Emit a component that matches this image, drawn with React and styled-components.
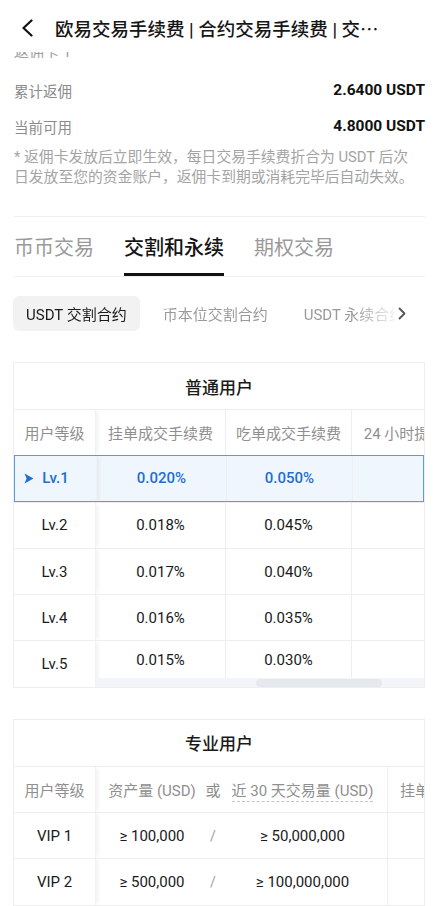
import React from "react";
import styled, { createGlobalStyle, css } from "styled-components";

const GlobalStyle = createGlobalStyle`
  html, body { margin: 0; padding: 0; background: #fff; overflow: hidden; }
  body {
    font-family: Roboto, "Noto Sans CJK SC", sans-serif;
    color: #1a1a1a;
    -webkit-font-smoothing: antialiased;
  }
  * { box-sizing: border-box; }
`;

const Page = styled.div`
  width: 440px;
  height: 906px;
  overflow: hidden;
  background: #fff;
`;

const Header = styled.header`
  height: 52px;
  padding: 4px 0 0 21px;
  display: flex;
  align-items: center;
  gap: 22px;
`;

const Title = styled.h1`
  margin: 0;
  font-size: 18.5px;
  font-weight: 500;
  color: #161616;
  white-space: nowrap;
`;

const Ellipsis = styled.span`
  font-family: "Noto Sans CJK SC", sans-serif;
  font-weight: 400;
`;

const Clip = styled.div`
  height: 6px;
  overflow: hidden;
  padding: 0 14px;
  display: flex;
  align-items: flex-end;
  span {
    font-size: 15px;
    line-height: 15px;
    color: #a0a0a0;
    margin-bottom: -2px;
  }
`;

const InfoList = styled.div`
  padding: 14px 15px 0 14px;
`;

const InfoRow = styled.div`
  height: 36px;
  display: flex;
  align-items: center;
  justify-content: space-between;
`;

const Label = styled.span`
  font-size: 14.5px;
  color: #8c8c8c;
`;

const Value = styled.span`
  font-size: 15.5px;
  font-weight: 700;
  color: #111;
`;

const Note = styled.p`
  margin: 3px 0 0;
  font-size: 14.8px;
  line-height: 20px;
  color: #a4a4a4;
  white-space: nowrap;
`;

const TabsBar = styled.nav`
  margin: 29px 15px 0 14px;
  border-top: 1px solid #efefef;
  border-bottom: 1px solid #efefef;
  display: flex;
  gap: 30px;
`;

const Tab = styled.div`
  height: 59px;
  padding-top: 3px;
  display: flex;
  align-items: center;
  font-size: 20px;
  border-bottom: 3px solid transparent;
  color: #9a9a9a;
  ${(p) =>
    p.$active &&
    css`
      color: #141414;
      font-weight: 500;
      border-bottom-color: #111;
    `}
`;

const SubTabs = styled.div`
  margin-top: 19px;
  padding-left: 13px;
  display: flex;
  align-items: center;
  height: 35px;
`;

const SubScroll = styled.div`
  flex: 1;
  min-width: 0;
  overflow: hidden;
  display: flex;
  gap: 10px;
  -webkit-mask-image: linear-gradient(to right, #000 calc(100% - 42px), rgba(0,0,0,0.15));
  mask-image: linear-gradient(to right, #000 calc(100% - 42px), rgba(0,0,0,0.15));
`;

const Pill = styled.div`
  flex-shrink: 0;
  height: 35px;
  padding: 0 13px;
  border-radius: 6px;
  display: flex;
  align-items: center;
  font-size: 15px;
  white-space: nowrap;
  color: #9a9a9a;
  ${(p) =>
    p.$active &&
    css`
      background: #f2f2f2;
      color: #1a1a1a;
    `}
`;

const MoreBox = styled.div`
  width: 46px;
  padding-left: 4px;
  display: flex;
  align-items: center;
`;

const Card = styled.section`
  margin: 31px 15px 0 13px;
  border: 1px solid #eeeeee;
  overflow: hidden;
`;

const CardTitle = styled.div`
  height: 46px;
  display: flex;
  align-items: center;
  justify-content: center;
  font-size: 17px;
  font-weight: 500;
  color: #1a1a1a;
`;

const Row = styled.div`
  display: flex;
  height: 46.3px;
  border-top: 1px solid #eeeeee;
  overflow: hidden;
  ${(p) =>
    p.$selected &&
    css`
      background: #eff6fe;
      border: 1.5px solid #5a9ade;
      color: #1e6fcf;
      font-weight: 500;
    `}
`;

const LevelCell = styled.div`
  width: 82px;
  flex-shrink: 0;
  display: flex;
  align-items: center;
  justify-content: center;
  gap: 8px;
  font-size: 15px;
  border-right: 1px solid #f1f1f1;
  box-shadow: 3px 0 4px -1px rgba(0, 0, 0, 0.06);
  color: ${(p) => (p.$head ? "#8f8f8f" : "inherit")};
`;

const Marker = styled.svg`
  margin-left: -18px;
  flex-shrink: 0;
`;

const RightPart = styled.div`
  flex: 1;
  min-width: 0;
  display: flex;
  flex-direction: column;
  overflow: hidden;
`;

const Cells = styled.div`
  display: flex;
  flex: ${(p) => (p.$short ? "0 0 37px" : "1")};
`;

const Cell = styled.div`
  width: ${(p) => p.$w}px;
  flex-shrink: 0;
  display: flex;
  align-items: center;
  justify-content: center;
  font-size: 15px;
  white-space: nowrap;
  border-right: 1px solid #eeeeee;
  color: ${(p) => (p.$head ? "#8f8f8f" : "inherit")};
`;

const SplitCell = styled.div`
  width: ${(p) => p.$w}px;
  flex-shrink: 0;
  display: flex;
  align-items: center;
  font-size: 15px;
  white-space: nowrap;
  border-right: 1px solid #eeeeee;
  color: ${(p) => (p.$head ? "#8f8f8f" : "inherit")};
`;

const Part = styled.span`
  width: ${(p) => (p.$w ? `${p.$w}px` : "auto")};
  flex: ${(p) => (p.$w ? "0 0 auto" : "1")};
  text-align: center;
`;

const Slash = styled.span`
  width: 10px;
  text-align: center;
  color: #a0a0a0;
  font-size: 14px;
`;

const Or = styled.span`
  width: 10px;
  display: flex;
  justify-content: center;
  color: #8a8a8a;
`;

const Dashed = styled.span`
  border-bottom: 1px dashed #c4c4c4;
  padding-bottom: 1px;
`;

const Track = styled.div`
  height: 9px;
  background: #f4f5f8;
  padding: 1px 0 0 160px;
  display: flex;
`;

const Thumb = styled.div`
  width: 126px;
  height: 8px;
  border-radius: 4px;
  background: #e5e8ef;
`;

const BackIcon = () => (
  <svg width="12" height="18" viewBox="0 0 12 18" fill="none">
    <path d="M10.5 1.5L2.5 9l8 7.5" stroke="#111" strokeWidth="2.2" strokeLinecap="round" strokeLinejoin="round" />
  </svg>
);

const MoreIcon = () => (
  <svg width="8" height="13" viewBox="0 0 8 13" fill="none">
    <path d="M1.5 1.5L6.5 6.5l-5 5" stroke="#555" strokeWidth="1.8" strokeLinecap="round" strokeLinejoin="round" />
  </svg>
);

const normalCols = [130, 126, 135];
const normalHead = ["挂单成交手续费", "吃单成交手续费", "24 小时提币额度"];
const levels = [
  ["Lv.1", "0.020%", "0.050%"],
  ["Lv.2", "0.018%", "0.045%"],
  ["Lv.3", "0.017%", "0.040%"],
  ["Lv.4", "0.016%", "0.035%"],
  ["Lv.5", "0.015%", "0.030%"],
];

const vips = [
  ["VIP 1", "≥ 100,000", "≥ 50,000,000"],
  ["VIP 2", "≥ 500,000", "≥ 100,000,000"],
  ["VIP 3", "≥ 2,000,000", "≥ 200,000,000"],
];

function NormalTable() {
  return (
    <Card>
      <CardTitle>普通用户</CardTitle>
      <Row>
        <LevelCell $head>用户等级</LevelCell>
        <RightPart>
          <Cells>
            {normalHead.map((h, i) => (
              <Cell key={h} $w={normalCols[i]} $head>
                {h}
              </Cell>
            ))}
          </Cells>
        </RightPart>
      </Row>
      {levels.map(([lv, maker, taker], idx) => {
        const selected = idx === 0;
        const last = idx === levels.length - 1;
        return (
          <Row key={lv} $selected={selected}>
            <LevelCell>
              {selected && (
                <Marker width="10" height="11" viewBox="0 0 10 11">
                  <path d="M0.5 0.5L9.5 5.5L0.5 10.5L2.6 5.5Z" fill="#1e6fcf" />
                </Marker>
              )}
              <span>{lv}</span>
            </LevelCell>
            <RightPart>
              <Cells $short={last}>
                <Cell $w={normalCols[0]}>{maker}</Cell>
                <Cell $w={normalCols[1]}>{taker}</Cell>
                <Cell $w={normalCols[2]} />
              </Cells>
              {last && (
                <Track>
                  <Thumb />
                </Track>
              )}
            </RightPart>
          </Row>
        );
      })}
    </Card>
  );
}

function ProTable() {
  return (
    <Card>
      <CardTitle>专业用户</CardTitle>
      <Row>
        <LevelCell $head>用户等级</LevelCell>
        <RightPart>
          <Cells>
            <SplitCell $w={292} $head>
              <Part $w={112}>资产量 (USD)</Part>
              <Or>或</Or>
              <Part>
                <Dashed>近 30 天交易量 (USD)</Dashed>
              </Part>
            </SplitCell>
            <Cell $w={130} $head>
              挂单成交手续费
            </Cell>
          </Cells>
        </RightPart>
      </Row>
      {vips.map(([lv, asset, vol]) => (
        <Row key={lv}>
          <LevelCell>{lv}</LevelCell>
          <RightPart>
            <Cells>
              <SplitCell $w={292}>
                <Part $w={112}>{asset}</Part>
                <Slash>/</Slash>
                <Part>{vol}</Part>
              </SplitCell>
              <Cell $w={130} />
            </Cells>
          </RightPart>
        </Row>
      ))}
    </Card>
  );
}

export default function App() {
  return (
    <Page>
      <GlobalStyle />
      <Header>
        <BackIcon />
        <Title>
          欧易交易手续费 | 合约交易手续费 | 交<Ellipsis>…</Ellipsis>
        </Title>
      </Header>
      <Clip>
        <span>返佣卡 1</span>
      </Clip>
      <InfoList>
        <InfoRow>
          <Label>累计返佣</Label>
          <Value>2.6400 USDT</Value>
        </InfoRow>
        <InfoRow>
          <Label>当前可用</Label>
          <Value>4.8000 USDT</Value>
        </InfoRow>
        <Note>
          * 返佣卡发放后立即生效，每日交易手续费折合为 USDT 后次
          <br />
          日发放至您的资金账户，返佣卡到期或消耗完毕后自动失效。
        </Note>
      </InfoList>
      <TabsBar>
        <Tab>币币交易</Tab>
        <Tab $active>交割和永续</Tab>
        <Tab>期权交易</Tab>
      </TabsBar>
      <SubTabs>
        <SubScroll>
          <Pill $active>USDT 交割合约</Pill>
          <Pill>币本位交割合约</Pill>
          <Pill>USDT 永续合约</Pill>
          <Pill>币本位永续合约</Pill>
        </SubScroll>
        <MoreBox>
          <MoreIcon />
        </MoreBox>
      </SubTabs>
      <NormalTable />
      <ProTable />
    </Page>
  );
}
